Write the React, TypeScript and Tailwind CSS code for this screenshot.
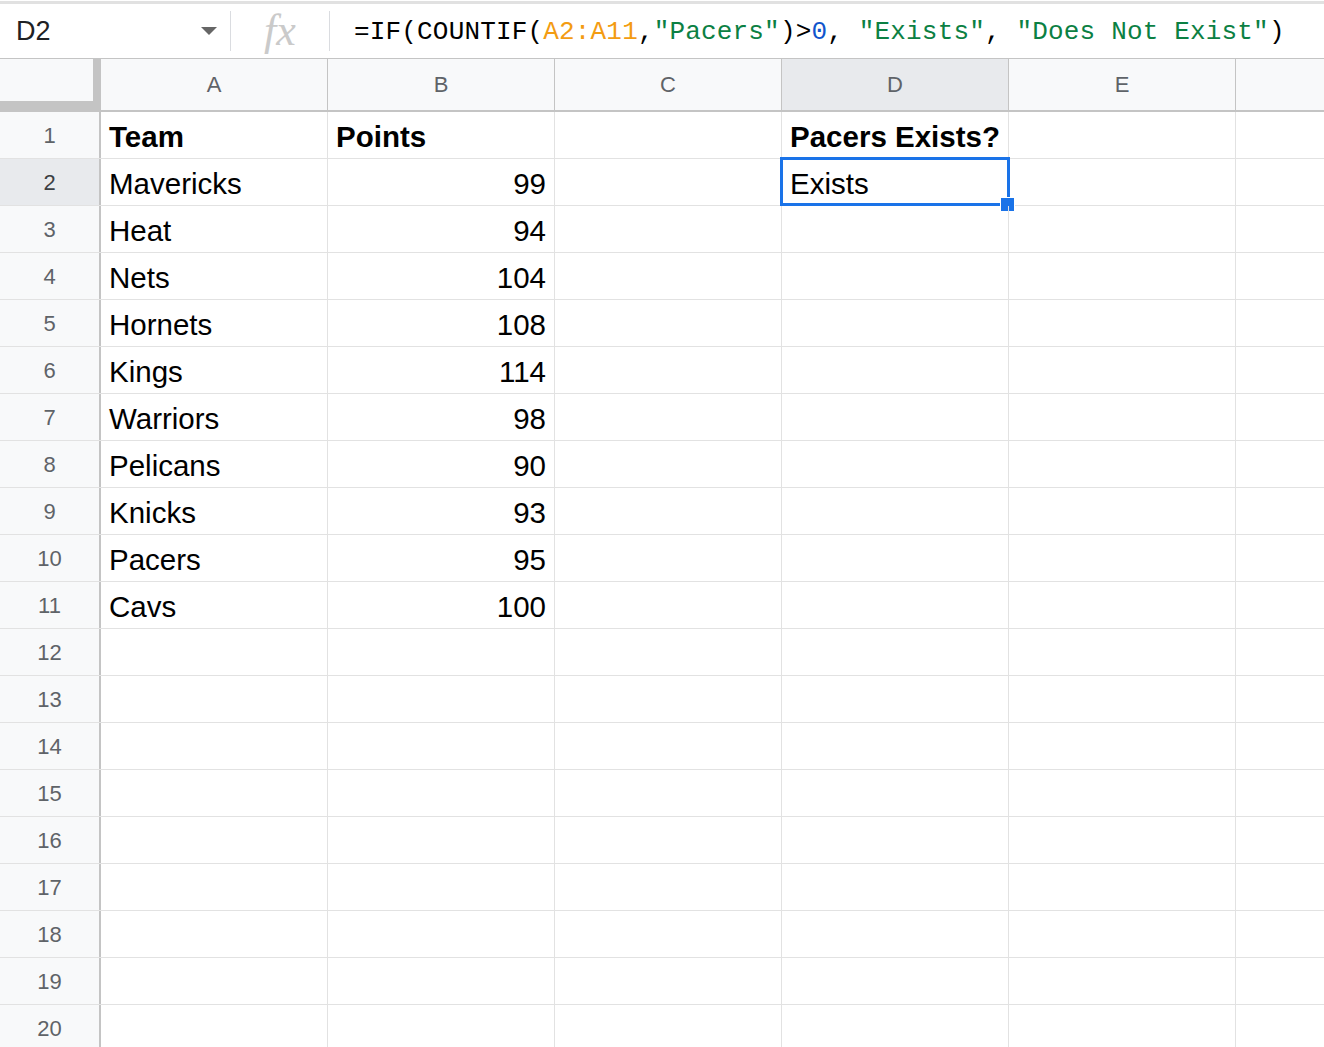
import React from 'react';

const rows: { team: string; points: string }[] = [
  { team: 'Mavericks', points: '99' },
  { team: 'Heat', points: '94' },
  { team: 'Nets', points: '104' },
  { team: 'Hornets', points: '108' },
  { team: 'Kings', points: '114' },
  { team: 'Warriors', points: '98' },
  { team: 'Pelicans', points: '90' },
  { team: 'Knicks', points: '93' },
  { team: 'Pacers', points: '95' },
  { team: 'Cavs', points: '100' },
];

const cols = ['A', 'B', 'C', 'D', 'E'];

const cellFont = { fontFamily: '"Liberation Sans", Arial, sans-serif' };

const Cell = ({ children, right, bold }: { children?: React.ReactNode; right?: boolean; bold?: boolean }) => (
  <div
    className={`w-[227px] shrink-0 h-full border-r border-[#e2e2e2] flex items-center px-2 pt-1 text-[29.5px] text-black whitespace-nowrap overflow-visible ${
      right ? 'justify-end' : ''
    } ${bold ? 'font-bold' : ''}`}
  >
    {children}
  </div>
);

const FormulaBar = () => (
  <div className="h-[58px] mt-px border-t-[3px] border-[#e1e1e1] border-b border-b-[#c4c4c4] flex items-center bg-white">
    <div className="w-[231px] h-[40px] flex items-center justify-between pl-4 pr-3 border-r border-[#dadce0]" style={cellFont}>
      <span className="text-[27px] text-[#202124]">D2</span>
      <svg width="18" height="10" viewBox="0 0 18 10">
        <path d="M1 1 L17 1 L9 9 Z" fill="#666" />
      </svg>
    </div>
    <div className="w-[99px] h-[40px] flex items-center justify-center border-r border-[#dadce0]">
      <span className="text-[44px] italic text-[#cacaca] leading-none" style={{ fontFamily: '"Liberation Serif", serif' }}>
        fx
      </span>
    </div>
    <div
      className="pl-6 pt-0.5 text-[26px] text-black whitespace-nowrap tracking-[0.17px]"
      style={{ fontFamily: '"Liberation Mono", monospace' }}
    >
      =IF(COUNTIF(<span className="text-[#f39c12]">A2:A11</span>,<span className="text-[#0b8043]">"Pacers"</span>)&gt;
      <span className="text-[#1155cc]">0</span>, <span className="text-[#0b8043]">"Exists"</span>,{' '}
      <span className="text-[#0b8043]">"Does Not Exist"</span>)
    </div>
  </div>
);

const HeaderRow = () => (
  <div className="h-[53px] flex bg-[#f8f9fa] border-b-2 border-[#c4c4c4]" style={cellFont}>
    <div className="w-[101px] shrink-0 h-full flex">
      <div className="flex-1 flex flex-col">
        <div className="flex-1" />
        <div className="h-[9px] bg-[#c4c4c4]" />
      </div>
      <div className="w-[8px] h-full bg-[#c4c4c4]" />
    </div>
    {cols.map((c) => (
      <div
        key={c}
        className={`w-[227px] shrink-0 h-full border-r border-[#c4c4c4] flex items-center justify-center text-[22px] text-[#5f6368] ${
          c === 'D' ? 'bg-[#e8eaed]' : ''
        }`}
      >
        {c}
      </div>
    ))}
    <div className="flex-1" />
  </div>
);

const Row = ({ n, children }: { n: number; children?: React.ReactNode }) => (
  <div className="h-[47px] flex border-b border-[#e2e2e2]" style={cellFont}>
    <div
      className={`w-[101px] shrink-0 h-full border-r-2 border-[#c4c4c4] flex items-center justify-center text-[22px] ${
        n === 2 ? 'bg-[#e8eaed] text-[#3c4043]' : 'bg-[#f8f9fa] text-[#5f6368]'
      }`}
    >
      {n}
    </div>
    {children}
  </div>
);

const App: React.FC = () => {
  const all = Array.from({ length: 20 }, (_, i) => i + 1);
  return (
    <div className="w-[1324px] h-[1047px] overflow-hidden bg-white">
      <FormulaBar />
      <HeaderRow />
      {all.map((n) => {
        const data = n >= 2 && n <= 11 ? rows[n - 2] : null;
        return (
          <Row key={n} n={n}>
            <Cell bold={n === 1}>{n === 1 ? 'Team' : data?.team}</Cell>
            <Cell bold={n === 1} right={n !== 1}>
              {n === 1 ? 'Points' : data?.points}
            </Cell>
            <Cell />
            <div className="relative w-[227px] shrink-0 h-full">
              <Cell bold={n === 1}>{n === 1 ? 'Pacers Exists?' : n === 2 ? 'Exists' : null}</Cell>
              {n === 2 && (
                <>
                  <div className="absolute -left-[2px] -top-[2px] -right-px -bottom-px border-[3px] border-[#1a73e8] pointer-events-none" />
                  <div className="absolute -right-[6px] -bottom-[7px] w-[15px] h-[15px] bg-[#1a73e8] border border-white" />
                </>
              )}
            </div>
            <Cell />
            <div className="flex-1" />
          </Row>
        );
      })}
    </div>
  );
};

export default App;
